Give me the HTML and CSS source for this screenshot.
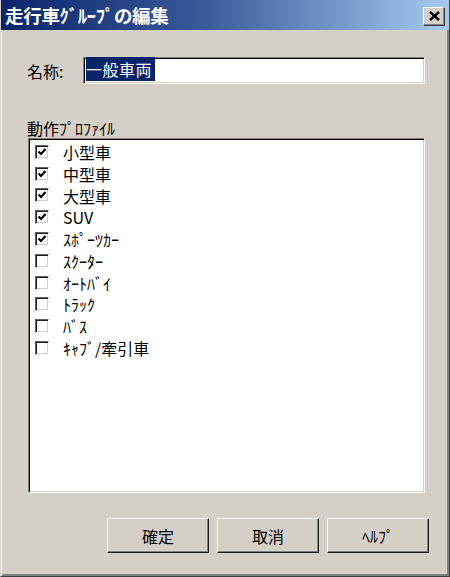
FILE: index.html
```html
<!DOCTYPE html>
<html lang="ja">
<head>
    <meta charset="UTF-8">
    <meta name="viewport" content="width=device-width, initial-scale=1.0">
    <title>走行車グループの編集</title>
    <link rel="stylesheet" href="styles.css">
</head>
<body>
    <div class="dialog">
        <div class="titlebar">
            <span class="title">走行車ｸﾞﾙｰﾌﾟの編集</span>
            <button class="close" type="button">
                <svg width="11" height="10" viewBox="0 0 11 10">
                    <path d="M1 1 L10 9 M10 1 L1 9" stroke="#000" stroke-width="2.4" fill="none"/>
                </svg>
            </button>
        </div>

        <div class="content">
            <div class="name-row">
                <label for="groupName">名称:</label>
                <div class="field" id="groupName"><span class="selected">一般車両</span></div>
            </div>

            <div class="section-label">動作ﾌﾟﾛﾌｧｲﾙ</div>
            <ul class="profile-list">
                <li><span class="check on"></span>小型車</li>
                <li><span class="check on"></span>中型車</li>
                <li><span class="check on"></span>大型車</li>
                <li><span class="check on"></span>SUV</li>
                <li><span class="check on"></span>ｽﾎﾟｰﾂｶｰ</li>
                <li><span class="check"></span>ｽｸｰﾀｰ</li>
                <li><span class="check"></span>ｵｰﾄﾊﾞｲ</li>
                <li><span class="check"></span>ﾄﾗｯｸ</li>
                <li><span class="check"></span>ﾊﾞｽ</li>
                <li><span class="check"></span>ｷｬﾌﾞ/牽引車</li>
            </ul>

            <div class="buttons">
                <button type="button">確定</button>
                <button type="button">取消</button>
                <button type="button">ﾍﾙﾌﾟ</button>
            </div>
        </div>
    </div>
</body>
</html>
```

FILE: styles.css
```css
body {
    margin: 0;
    background: #d4d0c8;
    font-family: "Noto Sans CJK JP", "Noto Sans", sans-serif;
    color: #000;
}
.dialog {
    width: 450px;
    height: 577px;
    box-sizing: border-box;
    background: #d4d0c8;
    border-left: 1px solid #d4d0c8;
    border-right: 1px solid #404040;
    border-bottom: 1px solid #404040;
    box-shadow: inset 1px 0 0 #fff, inset -2px -2px 0 #808080;
    display: flex;
    flex-direction: column;
}
.titlebar {
    height: 30px;
    display: flex;
    align-items: center;
    justify-content: space-between;
    padding: 0 4px 0 4px;
    background: linear-gradient(90deg, #0a246a 0%, #3a5a9a 45%, #a6caf0 100%);
}
.title {
    color: #fff;
    font-weight: bold;
    font-size: 18.5px;
    line-height: 30px;
    letter-spacing: -0.3px;
}
.close {
    width: 22px;
    height: 19px;
    padding: 0;
    margin-top: 2px;
    background: #d4d0c8;
    border: 1px solid;
    border-color: #fff #404040 #404040 #fff;
    box-shadow: inset -1px -1px 0 #808080;
    display: flex;
    align-items: center;
    justify-content: center;
}
.content {
    padding: 0 24px 0 26px;
}
.name-row {
    display: flex;
    align-items: center;
    margin-top: 27px;
    height: 27px;
}
.name-row label {
    width: 56px;
    font-size: 16px;
}
.field {
    flex: 1;
    height: 27px;
    box-sizing: border-box;
    background: #fff;
    border: 1px solid;
    border-color: #808080 #fff #fff #808080;
    box-shadow: inset 1px 1px 0 #000, inset -1px -1px 0 #d4d0c8;
    padding: 2px 0 0 2px;
    font-size: 16px;
    line-height: 19px;
}
.selected {
    background: #0a246a;
    color: #fff;
    padding: 0 3px 0 0;
    letter-spacing: 0.5px;
}
.section-label {
    margin-top: 34px;
    font-size: 16px;
    line-height: 20px;
}
.profile-list {
    list-style: none;
    margin: 0 0 0 1px;
    padding: 2px 0 0 0;
    height: 355px;
    box-sizing: border-box;
    background: #fff;
    border: 1px solid;
    border-color: #808080 #fff #fff #808080;
    box-shadow: inset 1px 1px 0 #000, inset -1px -1px 0 #d4d0c8;
}
.profile-list li {
    display: flex;
    align-items: center;
    height: 21.8px;
    font-size: 16px;
    padding-left: 6px;
}
.check {
    width: 14px;
    height: 14px;
    box-sizing: border-box;
    margin-right: 14px;
    background: #fff;
    border: 1px solid;
    border-color: #606060 #fff #fff #606060;
    box-shadow: inset 1px 1px 0 #202020, inset -1px -1px 0 #d4d0c8;
}
.check.on {
    background: #fff url("data:image/svg+xml;utf8,<svg xmlns='http://www.w3.org/2000/svg' width='12' height='12'><path d='M2.5 5.5 L5 8 L9.5 3' stroke='black' stroke-width='2.2' fill='none'/></svg>") no-repeat center;
}
.buttons {
    display: flex;
    justify-content: flex-end;
    gap: 8px;
    margin-top: 25px;
    margin-right: -4px;
}
.buttons button {
    width: 102px;
    height: 35px;
    font-family: inherit;
    font-size: 16px;
    background: #d4d0c8;
    border: 1px solid;
    border-color: #fff #202020 #202020 #fff;
    box-shadow: inset -1px -1px 0 #808080;
    padding: 0;
}
```
